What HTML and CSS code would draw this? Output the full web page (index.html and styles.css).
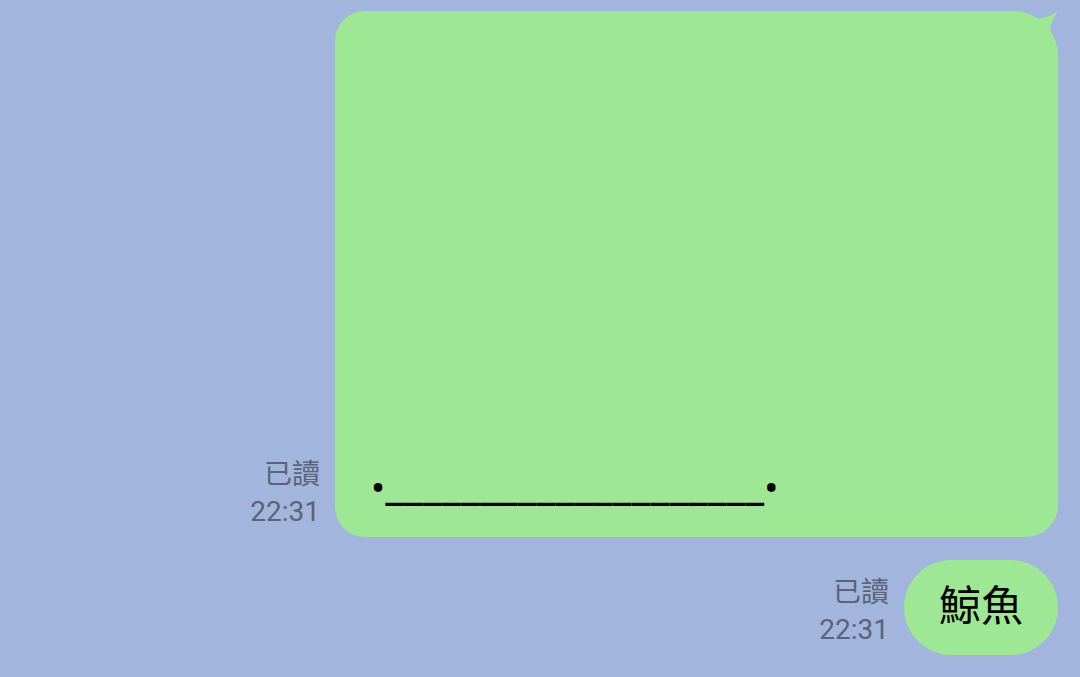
FILE: index.html
```html
<!DOCTYPE html>
<html lang="zh-Hant">
<head>
<meta charset="utf-8">
<title>Chat</title>
<link rel="stylesheet" href="styles.css">
</head>
<body>
<main class="chat">
  <div class="row">
    <div class="meta"><div>已讀</div><div>22:31</div></div>
    <div class="bubble bubble-big">
      <svg class="tail" width="40" height="40" viewBox="0 0 40 40" aria-hidden="true">
        <path d="M14 12 L20 7.6 Q31 6.5 40 0 Q33.5 9 32 19.4 L24 28 Z" fill="#9ee794"/>
      </svg>
      <span class="msg">•____________________•</span>
    </div>
  </div>
  <div class="row">
    <div class="meta"><div>已讀</div><div>22:31</div></div>
    <div class="bubble bubble-small"><span class="msg">鯨魚</span></div>
  </div>
</main>
</body>
</html>
```

FILE: styles.css
```css
html, body {
  margin: 0;
  padding: 0;
  background: #a2b5dc;
}
body {
  width: 1080px;
  height: 677px;
  overflow: hidden;
}
.chat {
  display: flex;
  flex-direction: column;
  gap: 23px;
  padding: 11px 22px 0 0;
}
.row {
  display: flex;
  justify-content: flex-end;
  align-items: flex-end;
  gap: 15px;
}
.meta {
  font-family: Roboto, "Noto Sans CJK TC", sans-serif;
  font-size: 28px;
  line-height: 37px;
  color: #5a6377;
  text-align: right;
  margin-bottom: 7px;
}
.bubble {
  position: relative;
  background: #9ee794;
  color: #000;
  font-family: Roboto, "Noto Sans CJK TC", sans-serif;
  font-size: 42px;
  line-height: 50px;
  box-sizing: border-box;
}
.bubble-big {
  width: 723px;
  height: 526px;
  border-radius: 30px 45px 32px 30px;
  display: flex;
  align-items: flex-end;
  padding: 0 35px 23px 36px;
}
.bubble-small {
  padding: 22px 35px 23px 35px;
  border-radius: 48px;
  white-space: nowrap;
}
.tail {
  position: absolute;
  top: 0;
  right: 0;
  display: block;
}
.msg {
  white-space: pre;
}
```
